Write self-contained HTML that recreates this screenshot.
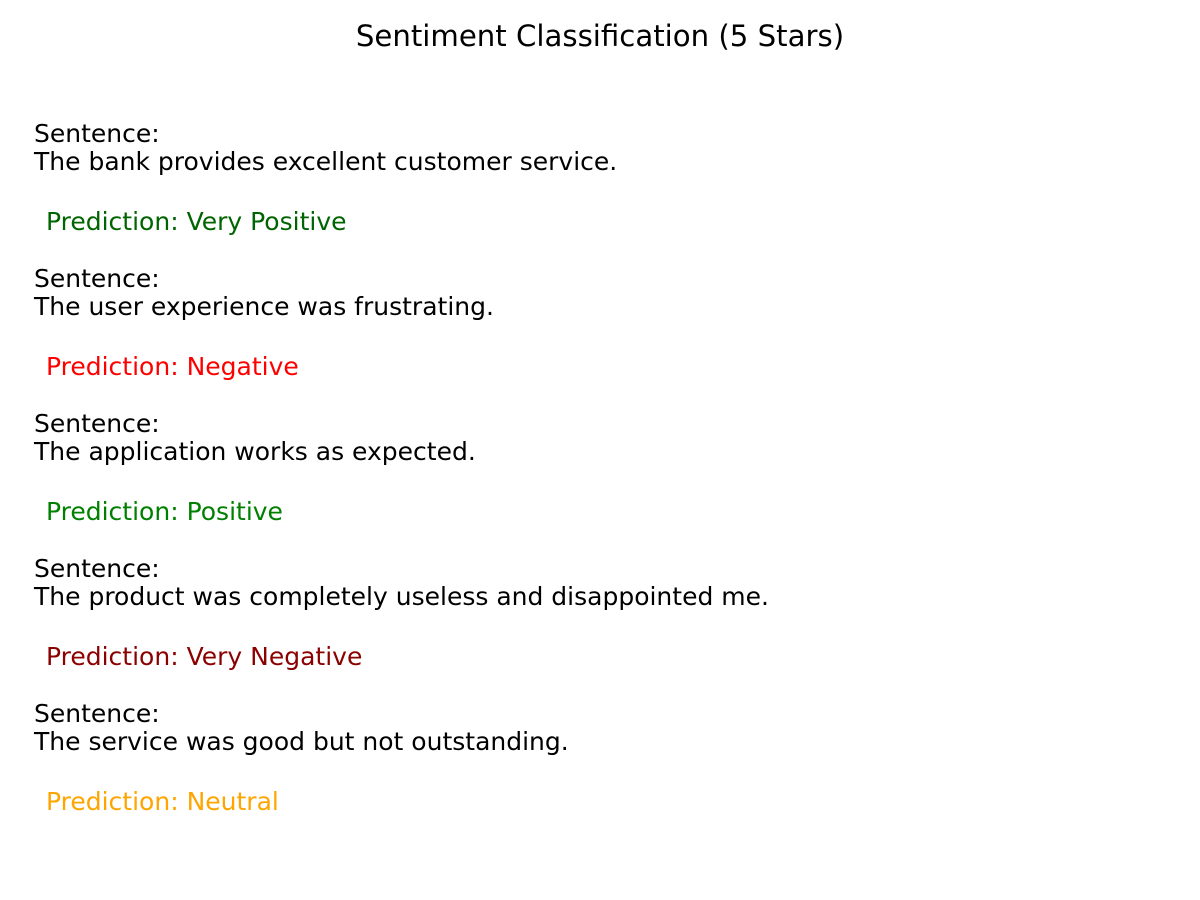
<!DOCTYPE html>
<html><head><meta charset="utf-8"><style>
html,body{margin:0;padding:0;background:#fff;}
body{width:1200px;height:900px;position:relative;overflow:hidden;font-family:"DejaVu Sans","Liberation Sans",sans-serif;}
.t{position:absolute;left:0;width:1200px;text-align:center;top:18px;font-size:29.2px;line-height:36px;color:#000;white-space:nowrap;}
.s{position:absolute;left:34px;font-size:25px;line-height:28px;color:#000;white-space:nowrap;}
.p{position:absolute;left:46px;font-size:25px;line-height:28px;white-space:nowrap;}
</style></head><body>
<div class="t">Sentiment Classification (5 Stars)</div>

<div class="s" style="top:120px">Sentence:<br>The bank provides excellent customer service.</div>
<div class="p" style="top:208px;color:#006400">Prediction: Very Positive</div>

<div class="s" style="top:265px">Sentence:<br>The user experience was frustrating.</div>
<div class="p" style="top:353px;color:#ff0000">Prediction: Negative</div>

<div class="s" style="top:410px">Sentence:<br>The application works as expected.</div>
<div class="p" style="top:498px;color:#008000">Prediction: Positive</div>

<div class="s" style="top:555px">Sentence:<br>The product was completely useless and disappointed me.</div>
<div class="p" style="top:643px;color:#8b0000">Prediction: Very Negative</div>

<div class="s" style="top:700px">Sentence:<br>The service was good but not outstanding.</div>
<div class="p" style="top:788px;color:#ffa500">Prediction: Neutral</div>
</body></html>
